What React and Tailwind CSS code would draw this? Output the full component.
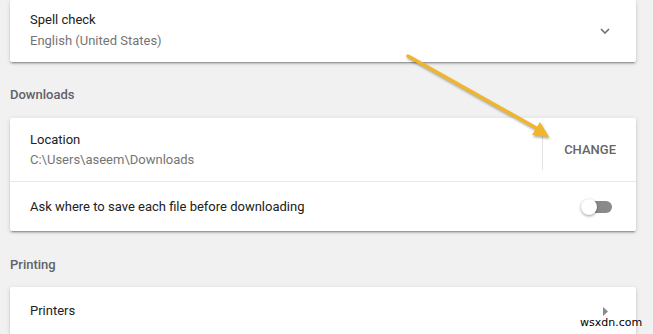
const cardShadow =
  'bg-white rounded-[2px] shadow-[0_2px_2px_0_rgba(0,0,0,0.14),0_1px_5px_0_rgba(0,0,0,0.12),0_3px_1px_-2px_rgba(0,0,0,0.2)]';

const SectionTitle = ({ children, className }) => (
  <div className={`h-5 leading-5 text-[13px] font-medium text-[#606368] ${className}`}>{children}</div>
);

const Toggle = () => (
  <div className="relative w-8 h-4 flex items-center">
    <div className="ml-[3px] w-[28px] h-3 rounded-full bg-[#8a8a8a]" />
    <div className="absolute left-0 top-0 w-4 h-4 rounded-full bg-white shadow-[0_1px_3px_rgba(0,0,0,0.4)]" />
  </div>
);

const Arrow = () => (
  <svg
    className="absolute left-0 top-0 pointer-events-none drop-shadow-[1px_2px_1px_rgba(0,0,0,0.3)]"
    width="653"
    height="334"
    viewBox="0 0 653 334"
  >
    <line x1="408" y1="56" x2="538" y2="129" stroke="#f0b52a" strokeWidth="3.5" strokeLinecap="round" />
    <polygon points="549,137 532,135 540,122" fill="#f0b52a" />
  </svg>
);

export default function App() {
  return (
    <div
      className="relative w-[653px] h-[334px] overflow-hidden bg-[#f1f1f1] text-[13px] text-[#212121]"
      style={{ fontFamily: 'Roboto, "Liberation Sans", sans-serif' }}
    >
      <div className="pl-[10px] w-[636px]">
        {/* Spell check (cut off at top) */}
        <div className={cardShadow}>
          <div className="h-[62px] pt-[9px] pl-5 pr-[26px] flex items-start justify-between">
            <div className="leading-[21px]">
              <div>Spell check</div>
              <div className="text-[#757575]">English (United States)</div>
            </div>
            <svg className="mt-[19px]" width="10" height="6" viewBox="0 0 10 6">
              <path d="M1 1l4 4 4-4" fill="none" stroke="#6e6e6e" strokeWidth="1.6" />
            </svg>
          </div>
        </div>

        <SectionTitle className="mt-[23px] mb-[13px]">Downloads</SectionTitle>

        <div className={cardShadow}>
          <div className="h-16 flex items-center border-b border-[#e8e8e8]">
            <div className="flex-1 pl-5 pt-[12px] self-start leading-5">
              <div>Location</div>
              <div className="text-[#757575]">C:\Users\aseem\Downloads</div>
            </div>
            <div className="w-px h-10 bg-[#e4e4e4]" />
            <div className="pl-[21px] pr-5 font-medium text-[#666666]">CHANGE</div>
          </div>
          <div className="h-[49px] flex items-center justify-between pl-5 pr-[23px]">
            <div>Ask where to save each file before downloading</div>
            <Toggle />
          </div>
        </div>

        <SectionTitle className="mt-[24px] mb-[12px]">Printing</SectionTitle>

        <div className={cardShadow}>
          <div className="h-12 flex items-center justify-between pl-5 pr-[28px]">
            <div>Printers</div>
            <svg width="5" height="9" viewBox="0 0 5 9">
              <path d="M0 0l5 4.5L0 9z" fill="#8a8a8a" />
            </svg>
          </div>
        </div>
      </div>

      <Arrow />

      <div
        className="absolute left-[580px] top-[316px] text-[11px] leading-[14px] text-black"
        style={{ fontFamily: '"DejaVu Sans", sans-serif' }}
      >
        wsxdn.com
      </div>
    </div>
  );
}
